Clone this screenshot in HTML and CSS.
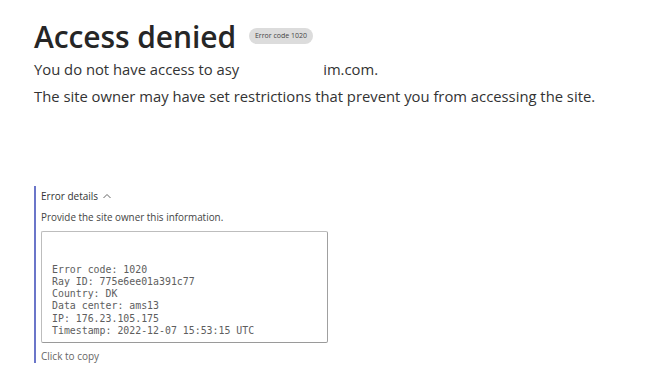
FILE: index.html
```html
<!DOCTYPE html>
<html>
<head>
<meta charset="utf-8">
<link rel="stylesheet" href="styles.css">
</head>
<body>
<main class="page">
  <header class="head">
    <h1 class="title">Access denied</h1>
    <span class="badge">Error code 1020</span>
  </header>
  <p class="lead">You do not have access to asy<span class="redact"></span>im.com.</p>
  <p class="lead">The site owner may have set restrictions that prevent you from accessing the site.</p>
  <section class="details">
    <div class="summary">Error details <svg class="chev" width="10" height="7" viewBox="0 0 10 7"><path d="M1.5 5 L5 1.5 L8.5 5" fill="none" stroke="#666" stroke-width="1"/></svg></div>
    <p class="hint">Provide the site owner this information.</p>
    <div class="box"><pre class="info">Error code: 1020
Ray ID: 775e6ee01a391c77
Country: DK
Data center: ams13
IP: 176.23.105.175
Timestamp: 2022-12-07 15:53:15 UTC</pre></div>
    <p class="copy">Click to copy</p>
  </section>
</main>
</body>
</html>
```
FILE: styles.css
```css
* { box-sizing: border-box; }
body {
  margin: 0;
  background: #fff;
  font-family: "Open Sans", "Noto Sans", sans-serif;
  color: #1f1f1f;
}
.page {
  padding: 17px 0 0 34px;
}
.head {
  display: flex;
  align-items: center;
  gap: 13px;
  margin-bottom: -1px;
}
.title {
  margin: 0;
  font-size: 30px;
  font-weight: 600;
  line-height: 40px;
  color: #262626;
  letter-spacing: -0.1px;
}
.badge {
  background: #dcdcdc;
  color: #444;
  font-size: 7px;
  border-radius: 9px;
  padding: 3px 6px;
  line-height: 10px;
  margin-top: -2px;
}
.lead {
  margin: 0;
  font-size: 14.8px;
  line-height: 27px;
  color: #333;
}
.redact {
  display: inline-block;
  width: 84px;
}
.details {
  margin-top: 76px;
  border-left: 2px solid #6b76c9;
  padding-left: 5px;
  width: 300px;
  padding-top: 2px;
}
.summary {
  font-size: 10px;
  line-height: 16px;
  color: #333;
  display: flex;
  align-items: center;
  gap: 4px;
}
.hint {
  margin: 6px 0 7px;
  font-size: 9.9px;
  line-height: 14px;
  color: #444;
}
.box {
  width: 287px;
  height: 112px;
  border: 1px solid #bdbdbd;
  border-right-color: #a0a0a0;
  border-bottom-color: #9a9a9a;
  border-radius: 2px;
  display: flex;
  align-items: flex-end;
  padding: 0 0 5px 10px;
}
.info {
  margin: 0;
  font-family: "DejaVu Sans Mono", monospace;
  font-size: 9.9px;
  line-height: 12.2px;
  color: #5e5e5e;
}
.copy {
  margin: 6px 0 0;
  font-size: 10px;
  line-height: 14px;
  color: #666;
}
```
